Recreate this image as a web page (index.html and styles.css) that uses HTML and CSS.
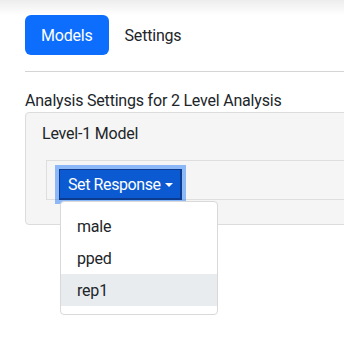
FILE: index.html
```html
<!DOCTYPE html>
<html>
<head>
    <title>Analysis Settings</title>
    <link rel="stylesheet" href="styles.css">
</head>
<body>
    <div class="app">
        <div class="topbar"></div>

        <div class="page">
            <ul class="nav">
                <li><a class="pill active" href="#">Models</a></li>
                <li><a class="pill" href="#">Settings</a></li>
            </ul>

            <hr>

            <p class="title">Analysis Settings for 2 Level Analysis</p>

            <div class="card">
                <div class="card-title">Level-1 Model</div>
                <div class="model-box">
                    <div class="dropdown">
                        <button class="btn-response">Set Response <span class="caret"></span></button>
                        <ul class="menu">
                            <li class="item">male</li>
                            <li class="item">pped</li>
                            <li class="item hover">rep1</li>
                        </ul>
                    </div>
                </div>
            </div>
        </div>
    </div>
</body>
</html>
```

FILE: styles.css
```css
body {
    margin: 0;
    font-family: Roboto, sans-serif;
    font-size: 16px;
    line-height: 24px;
    letter-spacing: -0.2px;
    color: #212529;
    background: #fff;
}

.app {
    height: 100vh;
    overflow: hidden;
}

.topbar {
    height: 15px;
    background: linear-gradient(#ededed, #fff);
}

.page {
    padding: 0 0 0 25px;
}

.nav {
    display: flex;
    list-style: none;
    margin: 0;
    padding: 0;
}

.pill {
    display: block;
    padding: 9px 16px 7px;
    border-radius: 6px;
    color: #212529;
    text-decoration: none;
}

.pill.active {
    background: #0d6efd;
    color: #fff;
}

hr {
    margin: 16px -200px 16px 0;
    border: 0;
    border-top: 1px solid #d4d4d4;
}

.title {
    margin: 0;
    padding-top: 2px;
    line-height: 22px;
}

.card {
    margin-right: -200px;
    background: #f5f5f5;
    border: 1px solid #dcdcdc;
    border-radius: 4px;
    padding: 9px 0 24px 0;
}

.card-title {
    padding: 0 16px;
}

.model-box {
    box-sizing: border-box;
    height: 40px;
    margin: 14px 0 0 20px;
    padding: 8px 12px;
    border: 1px solid #dedede;
}

.dropdown {
    position: relative;
    display: inline-block;
}

.btn-response {
    display: flex;
    align-items: center;
    box-sizing: border-box;
    height: 31px;
    padding: 1px 7px 0 8px;
    font: inherit;
    letter-spacing: -0.4px;
    color: #fff;
    background: #0b5ad2;
    border-style: solid;
    border-width: 1px 2px 2px 1px;
    border-color: #0a3b8f;
    box-shadow: 0 0 0 4px rgba(13, 110, 253, 0.45);
}

.caret {
    width: 0;
    height: 0;
    margin-left: 4px;
    border-left: 4px solid transparent;
    border-right: 4px solid transparent;
    border-top: 4px solid #fff;
}

.menu {
    position: absolute;
    top: 100%;
    left: 1px;
    box-sizing: border-box;
    width: 158px;
    margin: 1px 0 0;
    padding: 8px 0;
    list-style: none;
    background: #fff;
    border: 1px solid #d9d9d9;
    border-radius: 4px;
}

.item {
    padding: 5px 16px 3px;
}

.item.hover {
    background: #e9ecef;
}
```
